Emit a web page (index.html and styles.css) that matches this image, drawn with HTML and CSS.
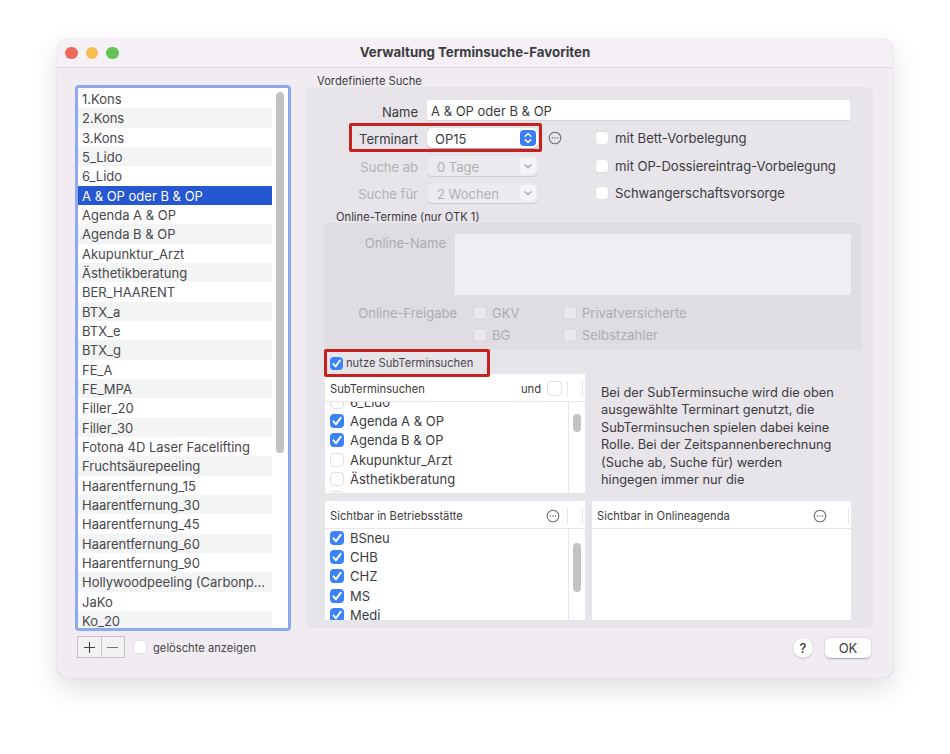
FILE: index.html
```html
<!DOCTYPE html>
<html lang="de">
<head>
    <meta charset="UTF-8">
    <title>Verwaltung Terminsuche-Favoriten</title>
    <link rel="stylesheet" href="styles.css">
</head>
<body>
    <svg class="defs" width="0" height="0">
        <symbol id="tick" viewBox="0 0 14 14">
            <path d="M3.4 7.4 L6 10.2 L10.7 3.8" fill="none" stroke="#fff" stroke-width="2" stroke-linecap="round" stroke-linejoin="round"/>
        </symbol>
        <symbol id="more" viewBox="0 0 14 14">
            <circle cx="7" cy="7" r="5.8" fill="none" stroke="#6e6c70" stroke-width="1.1"/>
            <circle cx="4.4" cy="7" r="0.8" fill="#6e6c70"/>
            <circle cx="7" cy="7" r="0.8" fill="#6e6c70"/>
            <circle cx="9.6" cy="7" r="0.8" fill="#6e6c70"/>
        </symbol>
        <symbol id="chevron" viewBox="0 0 16 16">
            <path d="M5 6.8 L8 9.6 L11 6.8" fill="none" stroke="#b4b2b6" stroke-width="1.6" stroke-linecap="round" stroke-linejoin="round"/>
        </symbol>
    </svg>

    <div class="window">
        <header class="titlebar">
            <div class="lights">
                <span class="light red"></span>
                <span class="light yellow"></span>
                <span class="light green"></span>
            </div>
            <h1>Verwaltung Terminsuche-Favoriten</h1>
        </header>

        <div class="content">
            <div class="sidebar">
                <div class="fav-list">
                    <ul class="fav-rows">
                        <li>1.Kons</li>
                        <li>2.Kons</li>
                        <li>3.Kons</li>
                        <li>5_Lido</li>
                        <li>6_Lido</li>
                        <li class="selected">A &amp; OP oder B &amp; OP</li>
                        <li>Agenda A &amp; OP</li>
                        <li>Agenda B &amp; OP</li>
                        <li>Akupunktur_Arzt</li>
                        <li>Ästhetikberatung</li>
                        <li>BER_HAARENT</li>
                        <li>BTX_a</li>
                        <li>BTX_e</li>
                        <li>BTX_g</li>
                        <li>FE_A</li>
                        <li>FE_MPA</li>
                        <li>Filler_20</li>
                        <li>Filler_30</li>
                        <li>Fotona 4D Laser Facelifting</li>
                        <li>Fruchtsäurepeeling</li>
                        <li>Haarentfernung_15</li>
                        <li>Haarentfernung_30</li>
                        <li>Haarentfernung_45</li>
                        <li>Haarentfernung_60</li>
                        <li>Haarentfernung_90</li>
                        <li>Hollywoodpeeling (Carbonp…</li>
                        <li>JaKo</li>
                        <li>Ko_20</li>
                    </ul>
                    <div class="fav-scroll"><div class="thumb"></div></div>
                </div>
                <div class="list-tools">
                    <div class="plus-minus">
                        <button class="pm-btn"><svg width="13" height="13" viewBox="0 0 13 13"><path d="M1 6.5 H12 M6.5 1 V12" stroke="#3f3e42" stroke-width="1.1" fill="none"/></svg></button>
                        <button class="pm-btn"><svg width="13" height="13" viewBox="0 0 13 13"><path d="M1 6.5 H12" stroke="#77767a" stroke-width="1.1" fill="none"/></svg></button>
                    </div>
                    <span class="check"></span>
                    <span class="small">gelöschte anzeigen</span>
                </div>
            </div>

            <div class="main">
                <div class="group-title">Vordefinierte Suche</div>
                <section class="group">
                    <div class="name-row">
                        <label class="field-label">Name</label>
                        <div class="name-input">A &amp; OP oder B &amp; OP</div>
                    </div>

                    <div class="top-form">
                        <div class="form-rows">
                            <div class="form-row">
                                <label class="field-label">Terminart</label>
                                <div class="select">
                                    <span>OP15</span>
                                    <span class="stepper">
                                        <svg width="16" height="16" viewBox="0 0 16 16"><path d="M5.2 6.2 L8 3.6 L10.8 6.2 M5.2 9.8 L8 12.4 L10.8 9.8" fill="none" stroke="#fff" stroke-width="1.5" stroke-linecap="round" stroke-linejoin="round"/></svg>
                                    </span>
                                </div>
                                <svg class="more-icon" width="14" height="14"><use href="#more"/></svg>
                            </div>
                            <div class="form-row">
                                <label class="field-label off">Suche ab</label>
                                <div class="select disabled">
                                    <span>0 Tage</span>
                                    <span class="drop"><svg width="16" height="16"><use href="#chevron"/></svg></span>
                                </div>
                            </div>
                            <div class="form-row">
                                <label class="field-label off">Suche für</label>
                                <div class="select disabled">
                                    <span>2 Wochen</span>
                                    <span class="drop"><svg width="16" height="16"><use href="#chevron"/></svg></span>
                                </div>
                            </div>
                        </div>
                        <div class="form-checks">
                            <div class="check-row"><span class="check"></span>mit Bett-Vorbelegung</div>
                            <div class="check-row"><span class="check"></span>mit OP-Dossiereintrag-Vorbelegung</div>
                            <div class="check-row"><span class="check"></span>Schwangerschaftsvorsorge</div>
                        </div>
                    </div>

                    <div class="online-title">Online-Termine (nur OTK 1)</div>
                    <div class="online-box">
                        <div class="online-name">
                            <label class="online-label">Online-Name</label>
                            <div class="online-area"></div>
                        </div>
                        <div class="release">
                            <label class="release-label">Online-Freigabe</label>
                            <div class="release-grid">
                                <div class="release-item"><span class="check dim"></span>GKV</div>
                                <div class="release-item"><span class="check dim"></span>Privatversicherte</div>
                                <div class="release-item"><span class="check dim"></span>BG</div>
                                <div class="release-item"><span class="check dim"></span>Selbstzahler</div>
                            </div>
                        </div>
                    </div>

                    <div class="use-sub">
                        <span class="check on small-check"><svg width="13" height="13"><use href="#tick"/></svg></span>
                        <span class="small">nutze SubTerminsuchen</span>
                    </div>

                    <div class="sub-area">
                        <div class="table">
                            <div class="table-head">
                                <span class="head-title">SubTerminsuchen</span>
                                <span class="head-and">und</span>
                                <span class="check"></span>
                                <span class="head-sep"></span>
                                <span class="head-sep last"></span>
                            </div>
                            <div class="table-body">
                                <ul class="table-rows sub-rows">
                                    <li><span class="check"></span>6_Lido</li>
                                    <li><span class="check on"><svg width="14" height="14"><use href="#tick"/></svg></span>Agenda A &amp; OP</li>
                                    <li><span class="check on"><svg width="14" height="14"><use href="#tick"/></svg></span>Agenda B &amp; OP</li>
                                    <li><span class="check"></span>Akupunktur_Arzt</li>
                                    <li><span class="check"></span>Ästhetikberatung</li>
                                    <li><span class="check"></span></li>
                                </ul>
                                <div class="table-scroll"><div class="thumb sub-thumb"></div></div>
                            </div>
                        </div>
                        <p class="sub-note">Bei der SubTerminsuche wird die oben ausgewählte Terminart genutzt, die SubTerminsuchen spielen dabei keine Rolle. Bei der Zeitspannenberechnung (Suche ab, Suche für) werden hingegen immer nur die</p>
                    </div>

                    <div class="bottom-tables">
                        <div class="table">
                            <div class="table-head">
                                <span class="head-title">Sichtbar in Betriebsstätte</span>
                                <svg class="more-icon" width="14" height="14"><use href="#more"/></svg>
                                <span class="head-sep"></span>
                                <span class="head-sep last"></span>
                            </div>
                            <div class="table-body">
                                <ul class="table-rows site-rows">
                                    <li><span class="check on"><svg width="14" height="14"><use href="#tick"/></svg></span>BSneu</li>
                                    <li><span class="check on"><svg width="14" height="14"><use href="#tick"/></svg></span>CHB</li>
                                    <li><span class="check on"><svg width="14" height="14"><use href="#tick"/></svg></span>CHZ</li>
                                    <li><span class="check on"><svg width="14" height="14"><use href="#tick"/></svg></span>MS</li>
                                    <li><span class="check on"><svg width="14" height="14"><use href="#tick"/></svg></span>Medi</li>
                                </ul>
                                <div class="table-scroll"><div class="thumb site-thumb"></div></div>
                            </div>
                        </div>
                        <div class="table narrow">
                            <div class="table-head">
                                <span class="head-title">Sichtbar in Onlineagenda</span>
                                <svg class="more-icon" width="14" height="14"><use href="#more"/></svg>
                                <span class="head-sep last"></span>
                            </div>
                        </div>
                    </div>

                    <!-- red marks from the screenshot -->
                    <div class="mark mark-terminart"></div>
                    <div class="mark mark-sub"></div>
                </section>

                <div class="actions">
                    <button class="help-btn">?</button>
                    <button class="ok-btn">OK</button>
                </div>
            </div>
        </div>
    </div>
</body>
</html>
```

FILE: styles.css
```css
* {
    box-sizing: border-box;
}
body {
    margin: 0;
    padding: 39px 57px;
    background-color: #ffffff;
    font-family: Inter, "Liberation Sans", sans-serif;
    font-size: 13px;
    color: #3c3b3e;
}
ul {
    list-style: none;
    margin: 0;
    padding: 0;
}
p {
    margin: 0;
}
.defs {
    position: absolute;
}
.window {
    width: 836px;
    height: 639px;
    background-color: #f0ecf2;
    border-radius: 10px;
    box-shadow: 0 0 1px rgba(0, 0, 0, 0.28), 0 10px 28px rgba(0, 0, 0, 0.13);
    overflow: hidden;
}
.titlebar {
    display: flex;
    align-items: center;
    height: 29px;
    padding: 0 8px;
    background-color: #f4f0f6;
    border-bottom: 1px solid #dddade;
}
.titlebar h1 {
    flex: 1;
    margin: 0 0 2px -58px;
    font-size: 13.3px;
    font-weight: 700;
    text-align: center;
    color: #3d3c40;
}
.lights {
    display: flex;
    gap: 8px;
    width: 58px;
}
.light {
    width: 12.5px;
    height: 12.5px;
    border-radius: 50%;
}
.light.red { background-color: #ee6a5f; }
.light.yellow { background-color: #f5bd4f; }
.light.green { background-color: #61c454; }

.content {
    display: flex;
    padding-left: 18px;
}
.sidebar {
    width: 216px;
    padding-top: 17px;
}
.fav-list {
    display: flex;
    height: 546px;
    background-color: #ffffff;
    border: 3px solid #8fa9ef;
    border-radius: 4px;
    overflow: hidden;
}
.fav-rows {
    width: 194px;
    padding-top: 1px;
    flex-shrink: 0;
}
.fav-rows li {
    height: 19.33px;
    line-height: 21px;
    padding-left: 4px;
    color: #48474a;
    white-space: nowrap;
}
.fav-rows li:nth-child(even) {
    background-color: #f3f4f4;
}
.fav-rows li.selected {
    background-color: #2557d0;
    color: #ffffff;
}
.fav-scroll {
    flex: 1;
    padding: 4px 4px 0;
}
.thumb {
    height: 361px;
    background-color: #c2c2c2;
    border-radius: 4px;
}
.list-tools {
    display: flex;
    align-items: center;
    padding: 5px 0 0 2px;
}
.plus-minus {
    display: flex;
    width: 48px;
    height: 22px;
    border: 1px solid #c4c2c6;
    background-color: #f4f1f5;
    margin-right: 8px;
}
.pm-btn {
    display: flex;
    align-items: center;
    justify-content: center;
    flex: 1;
    padding: 0;
    border: none;
    background: none;
}
.pm-btn + .pm-btn {
    border-left: 1px solid #c4c2c6;
}
.small {
    padding-top: 2px;
    font-size: 11.2px;
    color: #48474a;
}
.list-tools .small {
    margin-left: 6px;
}

.check {
    display: inline-flex;
    flex-shrink: 0;
    width: 14px;
    height: 14px;
    background-color: #ffffff;
    border: 1px solid #e2dfe4;
    border-radius: 4px;
}
.check.on {
    background-color: #3a82f7;
    border: none;
}
.check.dim {
    background-color: #e9e7ea;
    border-color: #d8d6da;
}
.check.small-check {
    width: 13px;
    height: 13px;
}

.main {
    width: 568px;
    margin-left: 14px;
}
.group-title {
    height: 19px;
    padding: 7px 0 0 12px;
    font-size: 11.2px;
    line-height: 12px;
    color: #3c3b3e;
}
.group {
    position: relative;
    height: 541px;
    padding-top: 13px;
    background-color: #e7e4ea;
    border-radius: 6px;
}
.name-row,
.form-row {
    display: flex;
    align-items: center;
}
.name-row {
    height: 21px;
    margin-bottom: 7px;
}
.field-label {
    width: 113px;
    margin-right: 9px;
    padding-top: 2px;
    text-align: right;
    color: #3c3b3e;
}
.field-label.off {
    color: #b3b1b5;
}
.name-input {
    width: 423px;
    height: 21px;
    padding-left: 4px;
    line-height: 23px;
    background-color: #ffffff;
    border-bottom: 1px solid #d6d4d8;
}
.top-form {
    display: flex;
    margin-right: 20px;
}
.form-rows {
    display: flex;
    flex-direction: column;
    gap: 7.5px;
    width: 290px;
}
.form-row {
    height: 20px;
}
.select {
    display: flex;
    align-items: center;
    justify-content: space-between;
    width: 111px;
    height: 20px;
    padding: 2px 2px 0 8px;
    background-color: #ffffff;
    border-radius: 5px;
    box-shadow: 0 0.5px 1px rgba(0, 0, 0, 0.25);
}
.stepper {
    display: flex;
    width: 16px;
    height: 16px;
    margin-bottom: 2px;
    background-color: #3a7ff2;
    border-radius: 4px;
}
.select.disabled {
    padding-left: 10px;
    background-color: #eceaee;
    box-shadow: 0 0.5px 1px rgba(0, 0, 0, 0.12);
    color: #b3b1b5;
}
.drop {
    display: flex;
    width: 16px;
    height: 16px;
    margin-bottom: 2px;
    background-color: #f4f3f5;
    border-radius: 4px;
}
.more-icon {
    flex-shrink: 0;
}
.form-row .more-icon {
    margin-left: 10px;
}
.form-checks {
    display: flex;
    flex-direction: column;
    gap: 7.5px;
}
.check-row {
    display: flex;
    align-items: center;
    gap: 6px;
    height: 20px;
    font-size: 13.1px;
}
.online-title {
    height: 14px;
    margin-top: 6px;
    padding-left: 31px;
    font-size: 11.2px;
    line-height: 16px;
}
.online-box {
    width: 538px;
    height: 127px;
    margin-left: 19px;
    padding-top: 11px;
    background-color: #dfdce2;
    border-radius: 5px;
}
.online-name {
    display: flex;
}
.online-label {
    width: 122px;
    margin-right: 9px;
    padding-top: 1px;
    text-align: right;
    color: #aeacb0;
}
.online-area {
    width: 396px;
    height: 61px;
    background-color: #f0eef3;
}
.release {
    display: flex;
    margin-top: 10px;
    color: #aeacb0;
}
.release-label {
    width: 133px;
    margin-right: 16px;
    line-height: 16px;
    text-align: right;
}
.release-grid {
    display: grid;
    grid-template-columns: 90px 1fr;
    grid-auto-rows: 16px;
    row-gap: 6px;
}
.release-item {
    display: flex;
    align-items: center;
    gap: 5px;
}
.use-sub {
    display: flex;
    align-items: center;
    gap: 3px;
    height: 24px;
    padding: 2px 0 0 25px;
}
.use-sub .small {
    padding-top: 0;
}
.sub-area {
    display: flex;
    margin-left: 20px;
}
.table {
    width: 260px;
    height: 119px;
    background-color: #ffffff;
    overflow: hidden;
}
.table.narrow {
    width: 259px;
}
.table-head {
    display: flex;
    align-items: center;
    height: 28px;
    padding: 2px 0 0 5px;
    border-bottom: 1px solid #e8e6e9;
    font-size: 11.2px;
}
.head-title {
    flex: 1;
}
.table-head .check {
    width: 15px;
    height: 15px;
    margin: 0 5px 0 6px;
}
.table-head .more-icon {
    margin-right: 7px;
}
.narrow .table-head .more-icon {
    margin-right: 21px;
}
.head-sep {
    width: 1px;
    height: 16px;
    margin-right: 14px;
    background-color: #e8e6e9;
}
.head-sep.last {
    margin-right: 2px;
}
.table-body {
    display: flex;
    height: 91px;
    overflow: hidden;
}
.table-rows {
    flex: 1;
    overflow: hidden;
}
.table-rows li {
    display: flex;
    align-items: center;
    gap: 6px;
    height: 19.33px;
    padding-left: 5px;
    white-space: nowrap;
}
.sub-rows {
    margin-top: -10px;
}
.site-rows {
    margin-top: -1px;
}
.table-scroll {
    width: 17px;
    padding: 12px 4px 0;
    border-left: 1px solid #e8e6e9;
}
.thumb.sub-thumb {
    height: 18px;
}
.thumb.site-thumb {
    height: 49px;
}
.sub-note {
    width: 238px;
    margin: 10px 0 0 16px;
    line-height: 17.4px;
    font-size: 12.8px;
}
.bottom-tables {
    display: flex;
    gap: 7px;
    margin: 8px 0 0 20px;
}
.bottom-tables .table-scroll {
    padding-top: 14px;
}
.mark {
    position: absolute;
    border: 3px solid #c81f1f;
    border-radius: 2px;
}
.mark-terminart {
    left: 44px;
    top: 36px;
    width: 193px;
    height: 29px;
}
.mark-sub {
    left: 19px;
    top: 262px;
    width: 166px;
    height: 28px;
}
.actions {
    display: flex;
    justify-content: flex-end;
    align-items: center;
    gap: 12px;
    padding: 10px 2px 0 0;
}
.help-btn {
    width: 20px;
    height: 20px;
    padding: 0;
    border: none;
    border-radius: 50%;
    background-color: #ffffff;
    box-shadow: 0 0.5px 1.5px rgba(0, 0, 0, 0.3);
    font-family: inherit;
    font-size: 13px;
    font-weight: 500;
    color: #3c3b3e;
}
.ok-btn {
    width: 46px;
    height: 20px;
    padding: 0;
    border: none;
    border-radius: 5px;
    background-color: #ffffff;
    box-shadow: 0 0.5px 1.5px rgba(0, 0, 0, 0.3);
    font-family: inherit;
    font-size: 13px;
    color: #3c3b3e;
}
```
